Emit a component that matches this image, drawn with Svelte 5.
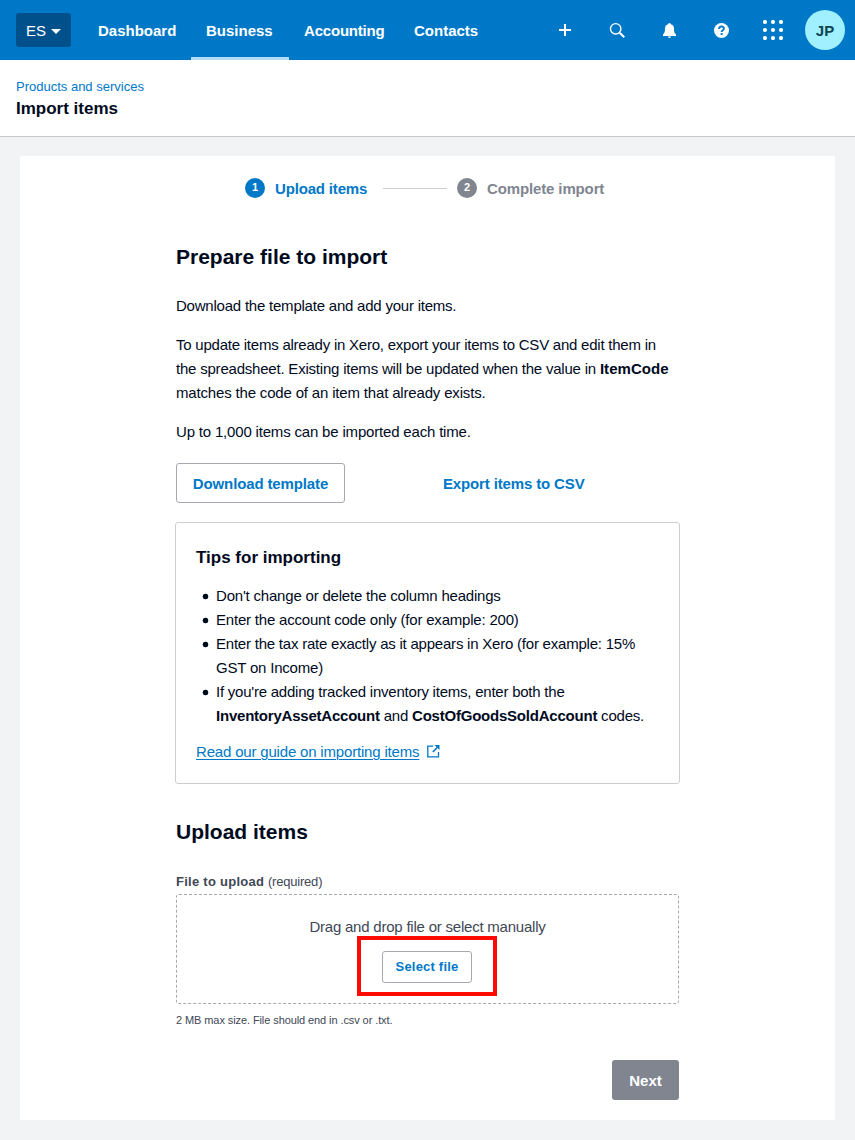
<script>
  const nav = [
    { label: "Dashboard", id: "dashboard" },
    { label: "Business", id: "business", active: true },
    { label: "Accounting", id: "accounting" },
    { label: "Contacts", id: "contacts" },
  ];
  const dots = [2, 10, 18];
</script>

<header class="topbar">
  <button class="org" type="button">ES
    <svg width="10" height="5" viewBox="0 0 10 5"><path d="M0 0h10L5 5z" fill="#fff" /></svg>
  </button>
  <nav class="nav">
    {#each nav as item}
      <a class="nav-link {item.id}" class:active={item.active} href="#{item.id}">{item.label}</a>
    {/each}
  </nav>
  <div class="tools">
    <button class="tool" type="button" aria-label="Create new">
      <svg width="20" height="20" viewBox="0 0 20 20"><path d="M10 4v12M4 10h12" stroke="#fff" stroke-width="2" /></svg>
    </button>
    <button class="tool" type="button" aria-label="Search">
      <svg width="20" height="20" viewBox="0 0 20 20" fill="none" stroke="#fff"><circle cx="8.7" cy="8.8" r="5.2" stroke-width="1.4" /><path d="M12.600 12.700l4.700 4.600" stroke-width="2" /></svg>
    </button>
    <button class="tool" type="button" aria-label="Notifications">
      <svg width="20" height="20" viewBox="0 0 20 20" fill="#fff"><path d="M9.300 4.200q0-1.200 1.200-1.200t1.200 1.200c2.300.5 3.300 2.100 3.300 4.300 0 3.300.5 4.800 2 5.800v1.700H4v-1.700c1.500-1 2-2.500 2-5.800 0-2.200 1-3.800 3.300-4.300z" /><path d="M9 16.500h3q-.2 1.500-1.500 1.500T9 16.500z" /></svg>
    </button>
    <button class="tool" type="button" aria-label="Help">
      <svg width="20" height="20" viewBox="0 0 20 20"><circle cx="10.500" cy="10.500" r="7.500" fill="#fff" /><path d="M8.100 8.900c0-3.100 4.800-3 4.800-.4 0 1.700-2.300 1.600-2.300 3.500" fill="none" stroke="#0078c8" stroke-width="1.900" /><path d="M9.600 13.100h2v1.900h-2z" fill="#0078c8" /></svg>
    </button>
    <button class="tool" type="button" aria-label="Apps">
      <svg width="20" height="20" viewBox="0 0 20 20" fill="#fff">
        {#each dots as cy}
          {#each dots as cx}<circle {cx} {cy} r="2.100" />{/each}
        {/each}
      </svg>
    </button>
  </div>
  <div class="avatar">JP</div>
</header>

<div class="page-head">
  <a class="crumb" href="#products">Products and services</a>
  <h1>Import items</h1>
</div>

<main class="panel">
  <ol class="steps">
    <li class="step current"><span class="num">1</span><span class="step-label">Upload items</span></li>
    <li class="line"></li>
    <li class="step"><span class="num">2</span><span class="step-label">Complete import</span></li>
  </ol>

  <div class="content">
    <h2>Prepare file to import</h2>
    <p class="intro">Download the template and add your items.</p>
    <p>
      <span class="row r1">To update items already in Xero, export your items to CSV and edit them in</span>
      <span class="row r2">the spreadsheet. Existing items will be updated when the value in <b>ItemCode</b></span>
      <span class="row r3">matches the code of an item that already exists.</span>
    </p>
    <p class="limit">Up to 1,000 items can be imported each time.</p>

    <div class="actions">
      <button class="btn" type="button">Download template</button>
      <button class="btn-link" type="button">Export items to CSV</button>
    </div>

    <section class="tips">
      <h3>Tips for importing</h3>
      <ul>
        <li><span class="row t1">Don't change or delete the column headings</span></li>
        <li><span class="row t2">Enter the account code only (for example: 200)</span></li>
        <li>
          <span class="row t3">Enter the tax rate exactly as it appears in Xero (for example: 15%</span>
          <span class="row t4">GST on Income)</span>
        </li>
        <li>
          <span class="row t5">If you're adding tracked inventory items, enter both the</span>
          <span class="row t6"><b>InventoryAssetAccount</b> and <b>CostOfGoodsSoldAccount</b> codes.</span>
        </li>
      </ul>
      <a class="guide" href="#guide"><span>Read our guide on importing items</span>
        <svg width="13" height="13" viewBox="0 0 13 13" fill="none" stroke="#0078c8"><path d="M6 1.100H.8v10.700h10.700V7" stroke-width="1.300" /><path d="M5.800 7L11 1.800" stroke-width="1.600" /><path d="M7.500 0h5v5z" fill="#0078c8" stroke="none" /></svg>
      </a>
    </section>

    <h2 class="upload-title">Upload items</h2>
    <div class="label"><b>File to upload</b> <span>(required)</span></div>
    <div class="dropzone">
      <div class="drop-text">Drag and drop file or select manually</div>
      <div class="pick">
        <button class="btn btn-small" type="button">Select file</button>
        <span class="highlight"></span>
      </div>
    </div>
    <div class="hint">2 MB max size. File should end in .csv or .txt.</div>

    <div class="footer"><button class="btn-next" type="button">Next</button></div>
  </div>
</main>

<style>
  :global(body) { background: #f2f3f5; color: #000a1e; font-family: "Liberation Sans", Arial, sans-serif; font-size: 15px; }
  button { font: inherit; border: 0; background: none; padding: 0; margin: 0; }
  a { text-decoration: none; color: #0078c8; }
  h1, h2, h3, p, ul, ol { margin: 0; padding: 0; }
  svg { display: block; }

  .topbar { display: flex; align-items: center; height: 60px; background: #0078c8; color: #fff; }
  .org { display: flex; align-items: center; gap: 5px; width: 55px; height: 34px; margin-left: 16px; padding-left: 10px; box-sizing: border-box; border-radius: 3px; background: #00508c; color: #fff; }
  .org svg { margin-top: 2px; }
  .nav { display: flex; height: 60px; margin-left: 12px; }
  .nav-link { box-sizing: border-box; height: 60px; padding: 1px 0 0 15px; line-height: 60px; color: #fff; font-weight: bold; white-space: nowrap; }
  .dashboard { width: 108px; }
  .business { width: 98px; }
  .accounting { width: 110px; letter-spacing: -.2px; }
  .contacts { width: 94px; }
  .active { border-bottom: 3px solid #b4dcf5; }
  .tools { display: flex; gap: 32px; margin-left: auto; }
  .tool { width: 20px; height: 20px; }
  .avatar { width: 40px; height: 40px; margin: 0 10px 0 22px; border-radius: 50%; background: #a0f0ff; color: #0d4652; font-weight: bold; line-height: 41px; text-align: center; }

  .page-head { height: 59px; padding: 17px 16px 0; background: #fff; border-bottom: 1px solid #c6c8cc; }
  .crumb { display: block; font-size: 13px; line-height: 20px; }
  h1 { font-size: 17px; line-height: 24px; }

  .panel { margin: 19px 20px 20px; padding: 22px 0 20px; background: #fff; }
  .steps { display: flex; align-items: center; height: 20px; margin-left: 225px; list-style: none; }
  .step { display: flex; align-items: center; gap: 10px; color: #808590; font-weight: bold; white-space: nowrap; letter-spacing: -.13px; }
  .num { flex: none; width: 20px; height: 20px; border-radius: 50%; background: #808590; color: #fff; font-size: 11px; line-height: 19px; text-align: center; }
  .current { width: 122px; color: #0078c8; letter-spacing: -.17px; }
  .current .num { background: #0078c8; }
  .line { width: 64px; height: 1px; margin: 0 10px 0 16px; background: #ccced2; }

  .content { width: 503px; margin-left: 156px; }
  h2 { margin-top: 45px; font-size: 21px; line-height: 28px; }
  p { margin-top: 15px; line-height: 24px; }
  .intro { margin-top: 23px; letter-spacing: -.22px; }
  .limit { letter-spacing: -.18px; }
  .row { display: block; white-space: nowrap; letter-spacing: -.2px; }
  .r1 { letter-spacing: -.23px; }
  .r2 { letter-spacing: -.21px; }
  .r2 b { letter-spacing: .05px; }
  .r3 { letter-spacing: -.17px; }
  .t3 { letter-spacing: -.22px; }
  .t5 { letter-spacing: -.23px; }
  .t6 { letter-spacing: -.22px; }
  .actions { display: flex; align-items: center; gap: 98px; margin-top: 19px; }
  .btn { width: 169px; height: 40px; border: 1px solid #a6a9b0; border-radius: 3px; background: #fff; color: #0078c8; font-weight: bold; white-space: nowrap; letter-spacing: -.13px; }
  .btn-link { color: #0078c8; font-weight: bold; letter-spacing: -.14px; }

  .tips { width: 505px; height: 262px; margin: 19px 0 0 -1px; padding: 22px 20px 0; box-sizing: border-box; border: 1px solid #ccced2; border-radius: 3px; }
  h3 { padding-top: 1px; font-size: 17px; line-height: 24px; }
  ul { margin-top: 14px; list-style: none; line-height: 24px; }
  ul li { display: grid; padding-left: 20px; background: radial-gradient(circle at 9.5px 12.5px, #000a1e 2.500px, transparent 3.200px); }
  .guide { display: flex; align-items: center; gap: 8px; margin-top: 12px; height: 24px; line-height: 24px; }
  .guide span { letter-spacing: -.18px; text-decoration: underline; text-underline-offset: 2px; text-decoration-thickness: 1px; }
  .guide svg { margin-top: -2px; }

  .upload-title { margin-top: 34px; }
  .label { margin-top: 26px; color: #404756; font-size: 13px; line-height: 20px; }
  .label b { letter-spacing: .27px; }
  .label span { letter-spacing: -.2px; }
  .dropzone { height: 110px; margin-top: 2px; padding-top: 20px; box-sizing: border-box; border: 1px dashed #a6a9b0; border-radius: 3px; color: #404756; text-align: center; }
  .drop-text { line-height: 24px; letter-spacing: -.22px; }
  .pick { position: relative; width: 90px; margin: 12px 0 0 205px; }
  .btn-small { display: block; width: 90px; height: 32px; padding-bottom: 1px; font-size: 13px; letter-spacing: .2px; }
  .highlight { position: absolute; top: -15px; left: -25px; width: 132px; height: 52px; border: 4px solid #ff0a00; }
  .hint { margin-top: 8px; color: #404756; font-size: 11px; line-height: 16px; letter-spacing: -.09px; }
  .footer { display: flex; justify-content: flex-end; margin-top: 32px; }
  .btn-next { width: 67px; height: 40px; border-radius: 3px; background: #808590; color: #fff; font-weight: bold; }
</style>
